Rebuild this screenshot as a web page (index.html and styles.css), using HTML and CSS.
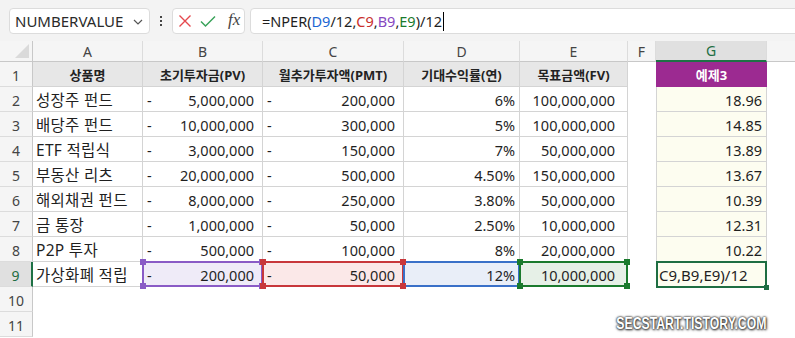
FILE: index.html
```html
<!DOCTYPE html>
<html>
<head>
  <meta charset="utf-8">
  <link rel="stylesheet" href="styles.css">
</head>
<body>
  <div class="bar">
    <div class="namebox">
      <span>NUMBERVALUE</span>
      <svg class="chev" width="10" height="6" viewBox="0 0 10 6"><path d="M1 1 L5 5 L9 1" fill="none" stroke="#555" stroke-width="1.2"/></svg>
    </div>
    <div class="dots"><i></i><i></i><i></i></div>
    <div class="funcbox">
      <svg width="14" height="14" viewBox="0 0 14 14"><path d="M1.5 1.5 L12.5 12.5 M12.5 1.5 L1.5 12.5" stroke="#e5484d" stroke-width="1.4" fill="none"/></svg>
      <svg width="16" height="13" viewBox="0 0 16 13"><path d="M1 6.5 L5.5 11 L15 1.5" stroke="#3aa35a" stroke-width="1.5" fill="none"/></svg>
      <span class="fx">fx</span>
    </div>
    <div class="formula">=NPER(<span class="r-d">D9</span>/12,<span class="r-c">C9</span>,<span class="r-b">B9</span>,<span class="r-e">E9</span>)/12<span class="caret"></span></div>
  </div>

  <div class="sheet">
    <!-- column headers -->
    <div class="corner"><span class="tri"></span></div>
    <div class="ch">A</div>
    <div class="ch">B</div>
    <div class="ch">C</div>
    <div class="ch">D</div>
    <div class="ch">E</div>
    <div class="ch">F</div>
    <div class="ch sel">G</div>
    <div class="ch last"></div>

    <!-- row 1 -->
    <div class="rh">1</div>
    <div class="c th">상품명</div>
    <div class="c th">초기투자금(PV)</div>
    <div class="c th">월추가투자액(PMT)</div>
    <div class="c th">기대수익률(연)</div>
    <div class="c th">목표금액(FV)</div>
    <div class="blank"></div>
    <div class="c ex head">예제3</div>
    <div class="blank"></div>

    <!-- row 2 -->
    <div class="rh">2</div>
    <div class="c txt">성장주 펀드</div>
    <div class="c acc"><span>-</span><span>5,000,000</span></div>
    <div class="c acc"><span>-</span><span>200,000</span></div>
    <div class="c num">6%</div>
    <div class="c fv">100,000,000</div>
    <div class="blank"></div>
    <div class="c ex num">18.96</div>
    <div class="blank"></div>

    <!-- row 3 -->
    <div class="rh">3</div>
    <div class="c txt">배당주 펀드</div>
    <div class="c acc"><span>-</span><span>10,000,000</span></div>
    <div class="c acc"><span>-</span><span>300,000</span></div>
    <div class="c num">5%</div>
    <div class="c fv">100,000,000</div>
    <div class="blank"></div>
    <div class="c ex num">14.85</div>
    <div class="blank"></div>

    <!-- row 4 -->
    <div class="rh">4</div>
    <div class="c txt">ETF 적립식</div>
    <div class="c acc"><span>-</span><span>3,000,000</span></div>
    <div class="c acc"><span>-</span><span>150,000</span></div>
    <div class="c num">7%</div>
    <div class="c fv">50,000,000</div>
    <div class="blank"></div>
    <div class="c ex num">13.89</div>
    <div class="blank"></div>

    <!-- row 5 -->
    <div class="rh">5</div>
    <div class="c txt">부동산 리츠</div>
    <div class="c acc"><span>-</span><span>20,000,000</span></div>
    <div class="c acc"><span>-</span><span>500,000</span></div>
    <div class="c num">4.50%</div>
    <div class="c fv">150,000,000</div>
    <div class="blank"></div>
    <div class="c ex num">13.67</div>
    <div class="blank"></div>

    <!-- row 6 -->
    <div class="rh">6</div>
    <div class="c txt">해외채권 펀드</div>
    <div class="c acc"><span>-</span><span>8,000,000</span></div>
    <div class="c acc"><span>-</span><span>250,000</span></div>
    <div class="c num">3.80%</div>
    <div class="c fv">50,000,000</div>
    <div class="blank"></div>
    <div class="c ex num">10.39</div>
    <div class="blank"></div>

    <!-- row 7 -->
    <div class="rh">7</div>
    <div class="c txt">금 통장</div>
    <div class="c acc"><span>-</span><span>1,000,000</span></div>
    <div class="c acc"><span>-</span><span>50,000</span></div>
    <div class="c num">2.50%</div>
    <div class="c fv">10,000,000</div>
    <div class="blank"></div>
    <div class="c ex num">12.31</div>
    <div class="blank"></div>

    <!-- row 8 -->
    <div class="rh">8</div>
    <div class="c txt">P2P 투자</div>
    <div class="c acc"><span>-</span><span>500,000</span></div>
    <div class="c acc"><span>-</span><span>100,000</span></div>
    <div class="c num">8%</div>
    <div class="c fv">20,000,000</div>
    <div class="blank"></div>
    <div class="c ex num">10.22</div>
    <div class="blank"></div>

    <!-- row 9 (formula references highlighted) -->
    <div class="rh sel">9</div>
    <div class="c txt">가상화폐 적립</div>
    <div class="c acc hl purple"><span>-</span><span>200,000</span><i class="h tl"></i><i class="h tr"></i><i class="h bl"></i><i class="h br"></i></div>
    <div class="c acc hl red"><span>-</span><span>50,000</span><i class="h tl"></i><i class="h tr"></i><i class="h bl"></i><i class="h br"></i></div>
    <div class="c num hl blue">12%</div>
    <div class="c fv hl green"><span>10,000,000</span><i class="h tl"></i><i class="h tr"></i><i class="h bl"></i><i class="h br"></i></div>
    <div class="blank"></div>
    <div class="c ex active">C9,B9,E9)/12<i class="h br"></i></div>
    <div class="blank"></div>

    <!-- rows 10, 11 -->
    <div class="rh">10</div>
    <div class="blank"></div><div class="blank"></div><div class="blank"></div><div class="blank"></div>
    <div class="blank"></div><div class="blank"></div><div class="blank"></div><div class="blank"></div>
    <div class="rh">11</div>
    <div class="blank"></div><div class="blank"></div><div class="blank"></div><div class="blank"></div>
    <div class="blank"></div><div class="blank"></div><div class="blank"></div><div class="blank"></div>
  </div>

  <div class="watermark">SECSTART.TISTORY.COM</div>
</body>
</html>
```

FILE: styles.css
```css
* {
  margin: 0;
  padding: 0;
  box-sizing: border-box;
}

body {
  width: 795px;
  height: 338px;
  overflow: hidden;
  background: #ffffff;
  font-family: "Noto Sans", "Noto Sans CJK KR", sans-serif;
  color: #1f1f1f;
  position: relative;
}

/* Formula bar */
.bar {
  height: 41px;
  background: #f3f3f3;
  display: flex;
  align-items: flex-start;
  padding: 8px 0 0 9px;
}

.namebox {
  width: 141px;
  height: 26px;
  background: #fff;
  border: 1px solid #dcdcdc;
  border-radius: 4px;
  display: flex;
  align-items: center;
  justify-content: space-between;
  padding: 0 6px 0 5px;
  font-size: 15px;
  color: #2a2a2a;
}

.chev {
  margin-top: 1px;
}

.dots {
  width: 22px;
  height: 26px;
  display: flex;
  flex-direction: column;
  align-items: center;
  justify-content: center;
  gap: 2px;
}

.dots i {
  width: 2px;
  height: 2px;
  background: #444;
}

.funcbox {
  width: 73px;
  height: 26px;
  background: #fff;
  border: 1px solid #dcdcdc;
  border-radius: 4px;
  display: flex;
  align-items: center;
  gap: 8px;
  padding-left: 5px;
}

.fx {
  font-family: "Liberation Serif", "DejaVu Serif", serif;
  font-style: italic;
  font-size: 17px;
  color: #444;
  margin-left: 4px;
  margin-top: -2px;
}

.formula {
  flex: 1;
  height: 26px;
  margin-left: 5px;
  margin-right: -6px;
  background: #fff;
  border: 1px solid #dcdcdc;
  border-radius: 4px;
  display: flex;
  align-items: center;
  padding-left: 11px;
  font-size: 14.5px;
  color: #1f1f1f;
  white-space: pre;
}

.r-d { color: #1b67d3; }
.r-c { color: #c9302c; }
.r-b { color: #8648c0; }
.r-e { color: #1a7a2d; }

.caret {
  display: inline-block;
  width: 1px;
  height: 19px;
  background: #000;
  margin-left: 1px;
}

/* Sheet grid */
.sheet {
  display: grid;
  grid-template-columns: 33px 110px 120px 141px 116px 108px 28px 111px 1fr;
  grid-template-rows: 21px repeat(11, 25px);
}

.corner {
  background: #f5f5f5;
  border-right: 1px solid #c8c8c8;
  border-bottom: 1px solid #c8c8c8;
  position: relative;
}

.tri {
  position: absolute;
  right: 3px;
  bottom: 3px;
  width: 0;
  height: 0;
  border-left: 14px solid transparent;
  border-bottom: 14px solid #dadada;
}

.ch {
  background: #f5f5f5;
  border-right: 1px solid #dcdcdc;
  border-bottom: 1px solid #c8c8c8;
  display: flex;
  align-items: center;
  justify-content: center;
  font-size: 14px;
  color: #444;
}

.ch.sel {
  background: #e0e0e0;
  color: #1e6e42;
  border-bottom: 2px solid #1e7145;
}

.ch.last {
  border-right: none;
}

.rh {
  background: #f5f5f5;
  border-right: 1px solid #c8c8c8;
  border-bottom: 1px solid #dcdcdc;
  display: flex;
  align-items: center;
  justify-content: center;
  font-size: 14px;
  color: #444;
  padding-top: 2px;
}

.rh.sel {
  background: #e0e0e0;
  color: #1e6e42;
  border-right: 2px solid #1e7145;
}

.c {
  border-right: 1px solid #d4d4d4;
  border-bottom: 1px solid #d4d4d4;
  display: flex;
  align-items: center;
  font-size: 14.5px;
  white-space: nowrap;
  padding-top: 1px;
}

.blank {
  background: #fff;
}

.th {
  background: #e7e7e7;
  justify-content: center;
  font-weight: 700;
  font-size: 13px;
  color: #222;
}

.txt {
  font-size: 15.5px;
  padding-left: 3px;
  letter-spacing: 0.3px;
}

.acc {
  justify-content: space-between;
  padding: 1px 8px 0 4px;
}

.num {
  justify-content: flex-end;
  padding-right: 4px;
}

.fv {
  justify-content: flex-end;
  padding-right: 12px;
}

/* Example column G */
.ex {
  background: #fdfdf0;
  border-left: 1px solid #d4d4d4;
}

.ex.head {
  background: #9c2a91;
  color: #fff;
  font-weight: 700;
  font-size: 13px;
  justify-content: center;
  border-color: #9c2a91;
}

/* Formula reference highlights */
.hl {
  position: relative;
}

.hl::before {
  content: '';
  position: absolute;
  left: -1px;
  top: -1px;
  right: -1px;
  bottom: -1px;
  border: 2px solid var(--ref);
  pointer-events: none;
}

.purple { --ref: #8a5bc6; background: #efebf8; }
.red { --ref: #c8373b; background: #fbe8e8; }
.blue { --ref: #3a70c8; background: #e9eef8; }
.green { --ref: #1a7a2d; background: #e6f0e7; }

.h {
  position: absolute;
  width: 6px;
  height: 6px;
  background: var(--ref);
  z-index: 2;
}

.h.tl { left: -3px; top: -3px; }
.h.tr { right: -3px; top: -3px; }
.h.bl { left: -3px; bottom: -3px; }
.h.br { right: -3px; bottom: -3px; }

/* Active cell in edit mode */
.active {
  position: relative;
  border: 2px solid #1e6e42;
  margin: -1px 0 -1px 0;
  font-size: 15px;
  padding-left: 1px;
  --ref: #1e6e42;
}

.active .h.br {
  width: 5px;
  height: 5px;
  right: -4px;
  bottom: -4px;
}

.watermark {
  position: absolute;
  right: 29px;
  bottom: 4px;
  font-family: "Liberation Sans", sans-serif;
  font-weight: 700;
  font-size: 17px;
  line-height: 20px;
  color: #fff;
  transform: scaleX(0.72);
  transform-origin: right center;
  text-shadow: 0 0 2px #222, 0 0 3px #444, 1px 1px 3px #333;
}
```
